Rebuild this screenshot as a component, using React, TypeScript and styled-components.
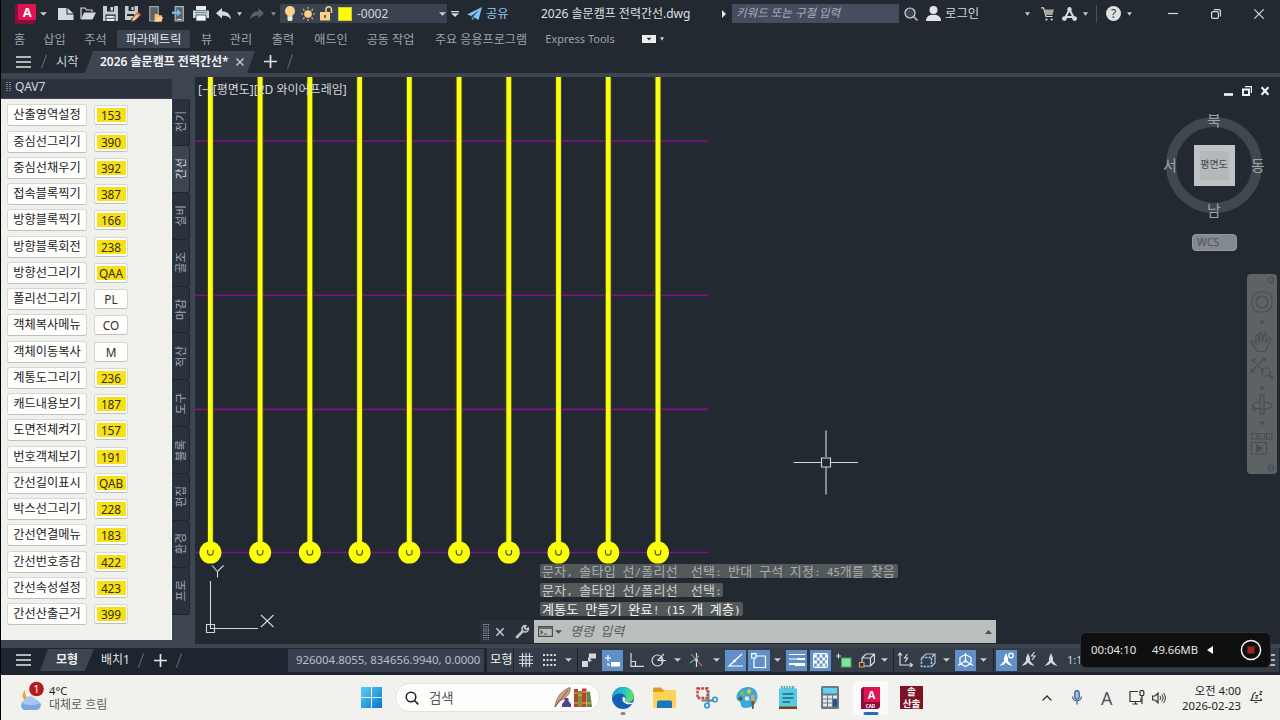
import React, { Fragment } from 'react';
import type { ReactNode } from 'react';
import styled, { createGlobalStyle, css } from 'styled-components';

const GlobalStyle = createGlobalStyle`
  * {
    box-sizing: border-box;
  }
  body {
    margin: 0;
    background: #000;
    font-family: 'Noto Sans', 'Noto Sans CJK KR', sans-serif;
    overflow: hidden;
  }
  svg {
    display: block;
    flex: none;
    overflow: visible;
  }
`;

const commands: [string, string][] = [
  ['산출영역설정', '153'],
  ['중심선그리기', '390'],
  ['중심선채우기', '392'],
  ['접속블록찍기', '387'],
  ['방향블록찍기', '166'],
  ['방향블록회전', '238'],
  ['방향선그리기', 'QAA'],
  ['폴리선그리기', 'PL'],
  ['객체복사메뉴', 'CO'],
  ['객체이동복사', 'M'],
  ['계통도그리기', '236'],
  ['캐드내용보기', '187'],
  ['도면전체켜기', '157'],
  ['번호객체보기', '191'],
  ['간선길이표시', 'QAB'],
  ['박스선그리기', '228'],
  ['간선연결메뉴', '183'],
  ['간선번호증감', '422'],
  ['간선속성설정', '423'],
  ['간선산출근거', '399'],
];

const plainCodes = ['PL', 'CO', 'M'];

const sideTabs = ['전기', '간선', '설비', '골조', '마감', '적산', '도구', '블록', '편집', '환경', '프로'];

const history = [
  { text: '문자, 솔타입 선/폴리선  선택: 반대 구석 지정: 45개를 찾음', width: 358, tone: '#a9adae' },
  { text: '문자, 솔타입 선/폴리선  선택:', width: 183, tone: '#c9cccd' },
  { text: '계통도 만들기 완료! (15 개 계층)', width: 203, tone: '#f2f3f3' },
];

const ribbonTabs = [
  { label: '홈', gap: 12, width: 13 },
  { label: '삽입', gap: 17, width: 23 },
  { label: '주석', gap: 18, width: 23 },
  { label: '파라메트릭', gap: 10, width: 73, active: true },
  { label: '뷰', gap: 10, width: 13 },
  { label: '관리', gap: 16, width: 24 },
  { label: '출력', gap: 18, width: 24 },
  { label: '애드인', gap: 18, width: 36 },
  { label: '공동 작업', gap: 17, width: 49 },
  { label: '주요 응용프로그램', gap: 18, width: 96 },
  { label: 'Express Tools', gap: 17, width: 68, size: 11 },
];

interface IconProps {
  w: number;
  h?: number;
  gap?: number;
  color?: string;
  children: ReactNode;
}

const Icon = ({ w, h = 16, gap = 0, color = '#d7dadd', children }: IconProps) => (
  <IconSlot $gap={gap}>
    <svg
      width={w}
      height={h}
      viewBox={`0 0 ${w} ${h}`}
      fill="none"
      stroke={color}
      strokeWidth="1.2"
    >
      {children}
    </svg>
  </IconSlot>
);

const Caret = ({ gap = 0, w = 5, color = '#c9cdd2' }: { gap?: number; w?: number; color?: string }) => (
  <Icon w={w} h={4} gap={gap}>
    <path d={`M0 0.3H${w}L${w / 2} 3.8Z`} fill={color} stroke="none" />
  </Icon>
);

const Burger = ({ gap = 0 }: { gap?: number }) => (
  <Icon w={15} h={12} gap={gap}>
    <path d="M0 1H15M0 6H15M0 11H15" stroke="#e4e6e8" strokeWidth="1.7" />
  </Icon>
);

const Slash = ({ gap = 0 }: { gap?: number }) => (
  <Icon w={6} h={15} gap={gap}>
    <path d="M0.5 14.5L5.5 0.5" stroke="#59616c" />
  </Icon>
);

const Plus = ({ gap = 0 }: { gap?: number }) => (
  <Icon w={13} h={13} gap={gap}>
    <path d="M6.5 0V13M0 6.5H13" stroke="#e4e6e8" strokeWidth="1.7" />
  </Icon>
);

const TitleBar = () => (
  <TitleRow>
    <Icon w={21} h={20} gap={14}>
      <path d="M2 0H21V17L18 20H0V2Z" fill="#8c0d38" stroke="none" />
      <path d="M3 0H21V16H3Z" fill="#e0124f" stroke="none" />
      <text x="12.3" y="13" textAnchor="middle" fontSize="13" fontWeight="700" fill="#fff" stroke="none">
        A
      </text>
    </Icon>
    <Caret gap={4} w={7} />
    <Icon w={16} h={12} gap={11}>
      <path d="M0 0H8.5V6.5H15.500V12H0Z" fill="#d7dadd" stroke="none" />
      <path d="M9.500 0L15.500 5.500H9.500Z" fill="#d7dadd" stroke="none" />
    </Icon>
    <Icon w={16} h={13} gap={6}>
      <path d="M1 12V1H5L6.5 3H12V5" />
      <path d="M1 12.5L4 5.5H16L12.5 12.5Z" fill="#d7dadd" stroke="none" />
    </Icon>
    <Icon w={15} h={15} gap={7}>
      <path d="M0 0H15V15H0Z" fill="#c6cacd" stroke="none" />
      <path d="M4 0H11V5.5H4Z" fill="#242a31" stroke="none" />
      <path d="M7.5 1H10V4.5H7.5Z" fill="#d7dadd" stroke="none" />
      <path d="M2.5 8.5H12.5V15H2.5Z" fill="#242a31" stroke="none" />
      <path d="M3.5 9.8H11.5V15H3.5Z" fill="#eceeef" stroke="none" />
      <path d="M3.5 12.4H11.5" stroke="#5a6068" />
    </Icon>
    <Icon w={16} h={16} gap={7}>
      <path d="M0 0H13V6L6 13V14H0Z" fill="#c6cacd" stroke="none" />
      <path d="M3.5 0H9.5V5H3.5Z" fill="#242a31" stroke="none" />
      <path d="M6.5 1H8.5V4H6.5Z" fill="#d7dadd" stroke="none" />
      <path d="M2 8H9V10H2Z" fill="#242a31" stroke="none" />
      <path d="M6.5 15.5L7.5 12L13 6.5L15.5 9L10 14.5Z" fill="#f0c78b" stroke="#7d4b23" strokeWidth=".7" />
      <path d="M12 7.5L13.3 6.2L15.8 8.7L14.5 10Z" fill="#d9683c" stroke="none" />
    </Icon>
    <Icon w={14} h={16} gap={8}>
      <path d="M.7 .7H9.3V15H.7Z" fill="#5a636c" stroke="#9aa1a8" />
      <path d="M5.5 15.5V8H9L10 9.3H13V15.5Z" fill="#e9bd6c" stroke="none" />
      <path d="M5.5 15.5L7.5 11H14L12.5 15.5Z" fill="#f6d79b" stroke="none" />
    </Icon>
    <Icon w={13} h={16} gap={9}>
      <path d="M3.2 .7H11.3V15H3.2Z" fill="#5a636c" stroke="#aeb4ba" />
      <path d="M0 5.5H5V3L9.5 6.7L5 10.3V8H0Z" fill="#6bbcf3" stroke="none" />
      <path d="M5 13.5H9.5" />
    </Icon>
    <Icon w={16} h={15} gap={8}>
      <path d="M3 0H13V4H3Z" fill="#e7e9ea" stroke="none" />
      <path d="M0 4.5H16V12H0Z" fill="#cfd3d6" stroke="none" />
      <path d="M2 6.5H14" stroke="#5c96c6" />
      <path d="M3 9H13V15H3Z" fill="#f4f5f5" stroke="#3b424a" strokeWidth=".8" />
    </Icon>
    <Icon w={15} h={12} gap={7}>
      <path d="M0 5.2L6 0V3.2C11 3.2 14.5 6 15 11.5C12.5 8.5 10 7.6 6 7.6V10.6Z" fill="#d7dadd" stroke="none" />
    </Icon>
    <Caret gap={6} />
    <Icon w={14} h={12} gap={8}>
      <path d="M14 5.2L8.5 0V3.2C4 3.2 .5 6 0 11.5C2.5 8.5 5 7.6 8.5 7.6V10.6Z" fill="#59616b" stroke="none" />
    </Icon>
    <Caret gap={7} color="#868d95" />
    <LayerCombo>
      <Icon w={10} h={15} gap={5}>
        <path d="M5 0A5 5 0 0 1 7.5 9.3V11H2.5V9.3A5 5 0 0 1 5 0Z" fill="#fbd289" stroke="none" />
        <path d="M2.5 11H7.5V14L6.5 15H3.5L2.5 14Z" fill="#e7e9ea" stroke="none" />
      </Icon>
      <Icon w={14} h={14} gap={6}>
        <circle cx="7" cy="7" r="3.8" fill="#fbd289" stroke="none" />
        <path
          d="M7 0V2M7 12V14M0 7H2M12 7H14M2 2L3.5 3.5M10.5 10.5L12 12M12 2L10.5 3.5M2 12L3.5 10.5"
          stroke="#dcb576"
        />
      </Icon>
      <Icon w={14} h={15} gap={4}>
        <path d="M1 6H11V14.5H1Z" fill="#fbd289" stroke="none" />
        <path d="M7 6V3.5A2.6 2.6 0 0 1 12.5 3.5V7" stroke="#fbd289" strokeWidth="1.5" />
        <path d="M6 9V12" stroke="#49402f" strokeWidth="1.5" />
      </Icon>
      <LayerColor />
      <Label $gap={5} $w={60} $size={12}>
        -0002
      </Label>
      <Caret gap={22} w={7} />
    </LayerCombo>
    <Icon w={8} h={6} gap={4}>
      <path d="M0 .6H8" />
      <path d="M0 2.2H8L4 6Z" fill="#d7dadd" stroke="none" />
    </Icon>
    <Icon w={15} h={14} gap={8}>
      <path d="M15 0L0 7.5L4.5 9L12 3L6 9.8L11.5 13Z" fill="#7cc4f4" stroke="none" />
      <path d="M4.6 9.5L5 13.5L7.3 11.2Z" fill="#4b9bd3" stroke="none" />
    </Icon>
    <Label $gap={4} $w={24} $color="#8ec8f0">
      공유
    </Label>
    <Label $gap={31} $w={150} $size={12} $color="#dfe1e3">
      2026 솔문캠프 전력간선.dwg
    </Label>
    <Icon w={4} h={8} gap={31}>
      <path d="M0 0L4 4L0 8Z" fill="#e4e6e8" stroke="none" />
    </Icon>
    <KeywordSearch>키워드 또는 구절 입력</KeywordSearch>
    <Icon w={14} h={14} gap={5}>
      <circle cx="6" cy="6" r="5" fill="#3b4652" />
      <path d="M9.6 9.6L13.5 13.5" strokeWidth="1.8" stroke="#b99f92" />
    </Icon>
    <Icon w={15} h={15} gap={8}>
      <circle cx="7.5" cy="4" r="4" fill="#e1e3e5" stroke="none" />
      <path d="M0 15C0 10.5 3 9.5 5.5 8.8H9.5C12 9.5 15 10.5 15 15Z" fill="#e1e3e5" stroke="none" />
    </Icon>
    <Label $gap={4} $w={35} $size={12.4}>
      로그인
    </Label>
    <Caret gap={45} />
    <Icon w={13} h={14} gap={11}>
      <path d="M0 .8H2.5L5 9.5H11.5" />
      <path d="M3 2.5H13L11.5 8H4.8Z" fill="#a9a79c" stroke="none" />
      <circle cx="5.5" cy="12.5" r="1.1" fill="#d7dadd" stroke="none" />
      <circle cx="10.7" cy="12.5" r="1.1" fill="#d7dadd" stroke="none" />
    </Icon>
    <Icon w={15} h={14} gap={8}>
      <path d="M2.8 11.5L7.5 2.5L12.2 11.5M4 10H11" strokeWidth="2" />
      <circle cx="7.5" cy="2.2" r="2.2" fill="#d7dadd" stroke="none" />
      <circle cx="2.4" cy="11.6" r="2.4" fill="#d7dadd" stroke="none" />
      <circle cx="12.6" cy="11.6" r="2.4" fill="#d7dadd" stroke="none" />
    </Icon>
    <Caret gap={6} />
    <Divider />
    <HelpBadge>?</HelpBadge>
    <Caret gap={6} />
    <Icon w={10} h={10} gap={36}>
      <path d="M0 4.5H10" />
    </Icon>
    <Icon w={10} h={10} gap={33}>
      <rect x=".6" y="2.6" width="6.8" height="6.8" rx="1.3" />
      <path d="M2.8 .6H8A1.4 1.4 0 0 1 9.4 2V7.4" />
    </Icon>
    <Icon w={10} h={10} gap={33}>
      <path d="M.3 .3L9.7 9.7M9.7 .3L.3 9.7" />
    </Icon>
  </TitleRow>
);

const Palette = () => (
  <PaletteColumn>
    <PaletteHeader>
      <Icon w={5} h={10} gap={5}>
        <path d="M1 0V10M4 0V10" stroke="#9ba2aa" strokeDasharray="1 1" strokeWidth="1.4" />
      </Icon>
      <Label $gap={4} $w={40} $size={12}>
        QAV7
      </Label>
    </PaletteHeader>
    <PaletteBody>
      {commands.map(([label, code]) => (
        <CommandRow key={label}>
          <CommandButton>{label}</CommandButton>
          <CodeButton>
            <Code $plain={plainCodes.includes(code)}>{code}</Code>
          </CodeButton>
        </CommandRow>
      ))}
    </PaletteBody>
  </PaletteColumn>
);

const Drawing = () => (
  <svg width="1085" height="567" viewBox="195 77 1085 567">
    <g stroke="#820f8d" strokeWidth="1.6">
      <path d="M195 141H708M195 295.3H708M195 409.4H708M195 552.5H708" />
    </g>
    {Array.from({ length: 10 }, (_, i) => {
      const x = 210.4 + i * 49.73;
      return (
        <g key={i}>
          <path d={`M${x} 77V545`} stroke="#4b4d16" strokeWidth="6.6" />
          <path d={`M${x} 77V545`} stroke="#fbff14" strokeWidth="4.8" />
          <circle cx={x} cy="552.6" r="11" fill="#fbff0c" />
          <path
            d={`M${x - 2.8} 550V552.3A2.8 2.8 0 0 0 ${x + 2.8} 552.3V550`}
            fill="none"
            stroke="#4f5310"
            strokeWidth="1.1"
          />
        </g>
      );
    })}
    <g stroke="#d5d8db" strokeWidth="1.1" fill="none">
      <path d="M210.5 581V628.5H258" />
      <path d="M206.5 624.5H214.5V632.5H206.5Z" />
      <path d="M212 565.5L217.5 571.5L223.5 565.5M217.5 571.5V577.5" />
      <path d="M261 615L273.5 627M273.5 615L261 627" />
      <path d="M826 430.5V457M826 467V494.5M793.5 462.5H821M831 462.5H858" />
      <path d="M821.5 458H830.5V467H821.5Z" />
    </g>
  </svg>
);

const ViewCube = () => (
  <CubeLayer>
    <CubeRing>
      <CubeFace>평면도</CubeFace>
    </CubeRing>
    <Compass $x={44} $y={0}>북</Compass>
    <Compass $x={0} $y={45}>서</Compass>
    <Compass $x={88} $y={45}>동</Compass>
    <Compass $x={44} $y={90}>남</Compass>
    <WcsButton>WCS</WcsButton>
  </CubeLayer>
);

const NavBar = () => (
  <NavPanel>
    <svg width="30" height="200" viewBox="0 0 30 200" fill="none" stroke="#484d51" strokeWidth="1.1">
      <circle cx="24" cy="6" r="2.6" />
      <rect x="5" y="18" width="20" height="20" rx="8" />
      <circle cx="15" cy="28" r="6" />
      <path d="M13 47H17L15 49.5Z" fill="#484d51" />
      <path d="M10 77C8 73 5 70 4 67.5C5 66 7.500 67.500 9.500 70L8.500 62C9 60.500 10.500 61 11 62.500L12.500 68L12.500 59.500C13 58 14.700 58 15 60L15.500 67L17.500 60C18.500 59 20 60 19.500 61.500L18.500 68.500L22 64C23.500 63.500 24.500 65 23.500 66.500L19.500 75L18.500 78Z" />
      <path d="M5 85L17 98M18 84L4 98M5 89V85H9M14 84H18V88M4 94V98H8" />
      <circle cx="19" cy="98" r="4.300" />
      <path d="M22 101L26 105" strokeWidth="2" />
      <path d="M13 113H17L15 115.500Z" fill="#484d51" />
      <path d="M13 121H17V140H13ZM13 128C2 129 2 135 15 135C28 135 28 129 17 128M8 132L5 135L9 137" />
      <path d="M13 148H17L15 150.500Z" fill="#484d51" />
      <path d="M4.500 159.500H10V165H4.500ZM12 159.500H17.500V165H12ZM19.500 159.500H25V165H19.500ZM4.500 168.500H19.500V180H4.500Z" />
      <path d="M9.500 171L15 174.200L9.500 177.500Z" fill="#484d51" />
      <circle cx="24" cy="194" r="3" />
      <path d="M22 194H26" />
    </svg>
  </NavPanel>
);

const monoParts = (text: string) =>
  text.split(/([가-힣]+)/).map((part, i) => (
    <Fragment key={i}>{i % 2 ? part : <Mono>{part}</Mono>}</Fragment>
  ));

const CommandLine = () => (
  <CommandLayer>
    {history.map(({ text, width, tone }) => (
      <HistoryLine key={text} $w={width} $tone={tone}>
        {monoParts(text)}
      </HistoryLine>
    ))}
    <CommandBar>
      <Icon w={6} h={16} gap={3}>
        <path d="M.8 0V16M3 0V16M5.300 0V16" stroke="#b4b9be" strokeDasharray="1 1.200" />
      </Icon>
      <Icon w={8} h={8} gap={7} color="#c2c6ca">
        <path d="M.3 .3L7.700 7.700M7.700 .3L.3 7.700" strokeWidth="1.500" />
      </Icon>
      <Icon w={14} h={14} gap={11} color="#c2c6ca">
        <path d="M1.200 12.800L8 6" strokeWidth="2.600" />
        <path d="M13.300 3A3.200 3.200 0 1 1 10.800 .7L9.500 3L10.900 4.500Z" strokeWidth="1.600" />
      </Icon>
      <CommandInput>
        <Icon w={15} h={11} gap={4} color="#4b5053">
          <path d="M.6 .6H14.400V10.400H.6ZM.6 2.200H14.400" />
          <path d="M2.500 4.500L4.500 6.200L2.500 8M6 8H9" />
        </Icon>
        <Caret gap={2} w={7} color="#4b5053" />
        <CommandHint>
          명령<Mono> </Mono>입력
        </CommandHint>
        <Icon w={7} h={4}>
          <path d="M0 4L3.500 0L7 4Z" fill="#4b5053" stroke="none" />
        </Icon>
      </CommandInput>
    </CommandBar>
  </CommandLayer>
);

const Viewport = () => (
  <Canvas>
    <ViewControls>
      <span>[−][평면도][2D 와이어프레임]</span>
    </ViewControls>
    <Drawing />
    <WindowButtons>
      <Icon w={9} h={9} color="#f3f4f5">
        <path d="M0 7.500H9" strokeWidth="2.600" />
      </Icon>
      <Icon w={10} h={10} color="#f3f4f5">
        <path d="M1 3.500H7V9H1Z" strokeWidth="2" />
        <path d="M3 .7H9.400V7" />
      </Icon>
      <Icon w={8} h={8} color="#f3f4f5">
        <path d="M.6 .3L7.400 7.700M7.400 .3L.6 7.700" strokeWidth="2.200" />
      </Icon>
    </WindowButtons>
    <ViewCube />
    <NavBar />
    <CommandLine />
  </Canvas>
);

const annotation = 'M7 0L9 5V8L13.500 13L9 11.500L7 9.500L5 11.500L.5 13L5 8V5Z';

const StatusBar = () => (
  <StatusRow>
    <Burger gap={15} />
    <LayoutTab>모형</LayoutTab>
    <Label $gap={7} $w={30} $size={12} $color="#e2e4e6">
      배치1
    </Label>
    <Slash gap={7} />
    <Plus gap={10} />
    <Slash gap={9} />
    <Coordinates>926004.8055, 834656.9940, 0.0000</Coordinates>
    <StatusGroup $gap={3} $w={26}>
      <Label $gap={3} $w={24} $color="#f0f1f2">
        모형
      </Label>
    </StatusGroup>
    <StatusGroup $gap={1} $w={63}>
      <Icon w={14} h={14} gap={5}>
        <path d="M3.500 0V14M7 0V14M10.500 0V14M0 3.500H14M0 7H14M0 10.500H14" />
      </Icon>
      <Icon w={13} h={12} gap={10}>
        <path d="M0 1H13M0 6H13M0 11H13" strokeDasharray="2 1.600" strokeWidth="1.800" />
      </Icon>
      <Caret gap={9} w={7} />
    </StatusGroup>
    <StatusGroup $gap={1} $w={315}>
      <Icon w={14} h={14} gap={4}>
        <path d="M0 8H6V14H0ZM6 4V8H10" fill="#d7dadd" stroke="none" />
        <path d="M7.500 9V1H13V5H7.500" />
        <path d="M8 1H14V5H8Z" fill="#d7dadd" stroke="none" />
      </Icon>
      <Toggle $gap={6} $w={21}>
        <Icon w={15} h={13} color="#fff">
          <path d="M0 4H6M3 1V7M3 9V11H5" />
          <path d="M6 8H15V12.500H6Z" fill="#fff" stroke="none" />
        </Icon>
      </Toggle>
      <Icon w={14} h={14} gap={7}>
        <path d="M1 0V13.300H14M1 8.500H5.500V13" />
      </Icon>
      <Icon w={15} h={14} gap={7}>
        <circle cx="6.500" cy="7.500" r="5.500" />
        <path d="M6.500 7.500L13 1M6.500 7.500H15M10 5L11.500 10" />
      </Icon>
      <Caret gap={8} w={7} />
      <Icon w={13} h={14} gap={9}>
        <path d="M1 1L12 13" stroke="#b6617c" />
        <path d="M6.500 0V14" stroke="#dadddf" />
        <path d="M0 10L9 3" stroke="#6fae87" />
        <circle cx="6.500" cy="7" r="1.500" fill="#d7dadd" stroke="none" />
      </Icon>
      <Caret gap={10} w={7} />
      <Toggle $gap={5} $w={21}>
        <Icon w={16} h={14} color="#fff">
          <path d="M15 13H1L14 1" />
          <circle cx="6.500" cy="8" r="1.400" fill="#fff" stroke="none" />
        </Icon>
      </Toggle>
      <Toggle $gap={2} $w={22}>
        <Icon w={16} h={15} color="#fff">
          <path d="M3 3H14.500V14.500H3Z" />
          <path d="M.6 .6H5V5H.6Z" fill="#6396cf" />
        </Icon>
      </Toggle>
      <Caret gap={4} w={7} />
      <Toggle $gap={5} $w={21}>
        <Icon w={16} h={14} color="#fff">
          <path d="M0 1.500H16M0 6H8" />
          <path d="M8 6H16M0 11H6" strokeWidth="2" />
          <path d="M6 11.500H16" strokeWidth="3" />
        </Icon>
      </Toggle>
      <Toggle $gap={3} $w={21}>
        <Icon w={15} h={15} color="#fff">
          <rect x=".6" y=".6" width="13.800" height="13.800" rx="1.500" />
          <path d="M1 3H14M1 9H14" strokeDasharray="3 2.500" strokeWidth="3" />
          <path d="M3.800 6H14M3.800 12H14" strokeDasharray="3 2.500" strokeWidth="3" />
        </Icon>
      </Toggle>
      <Icon w={15} h={15} gap={5}>
        <path d="M0 3H5M2.500 .5V5.500" />
        <path d="M5.500 5H15V14H5.500Z" fill="#7fe59a" stroke="#4aa367" />
      </Icon>
      <Icon w={16} h={15} gap={8}>
        <path d="M3 5L7 1H15.400V9L11.500 13H3ZM3 5H11.500V13M11.500 5L15.400 1" />
        <path d="M.5 9.500H5V14H.5Z" fill="#2d3540" stroke="#dc9c62" />
      </Icon>
      <Caret gap={6} w={7} />
    </StatusGroup>
    <StatusGroup $gap={1} $w={99}>
      <Icon w={15} h={14} gap={4}>
        <path d="M2 0V12H14M0 2.500L2 0L4 2.500M12 10L14.500 12L12 14M9.500 1L6.500 5H9.500L7 9" />
      </Icon>
      <Icon w={16} h={15} gap={7} color="#8cc5ee">
        <path d="M1.500 4.500H11.500V13.500H1.500Z" strokeDasharray="2.500 1" strokeWidth="1.600" />
        <path d="M3 4L6 1H15V10L12 13M12 4L15 1" stroke="#b8bec5" />
      </Icon>
      <Caret gap={7} w={7} />
      <Toggle $gap={5} $w={21}>
        <Icon w={15} h={15} color="#fff">
          <path d="M7.500 1.500L13 4.500V10.500L7.500 13.500L2 10.500V4.500ZM7.500 0V8L0 12.500M7.500 8L15 12.500" />
          <circle cx="7.500" cy="8" r="1.500" fill="#fff" stroke="none" />
        </Icon>
      </Toggle>
      <Caret gap={4} w={7} />
    </StatusGroup>
    <StatusGroup $gap={1} $w={285}>
      <Toggle $gap={2} $w={21}>
        <Icon w={15} h={14} color="#fff">
          <path d={annotation} fill="#fff" stroke="none" />
          <circle cx="12" cy="2.500" r="2.300" fill="#6396cf" />
        </Icon>
      </Toggle>
      <Icon w={15} h={14} gap={4}>
        <path d={annotation} fill="#d7dadd" stroke="none" />
        <path d="M13.500 -1L10.500 3H14L11 7" />
      </Icon>
      <Icon w={14} h={14} gap={8}>
        <path d={annotation} fill="#d7dadd" stroke="none" />
      </Icon>
      <Label $gap={9} $w={200} $size={11}>
        1:1
      </Label>
      <Icon w={8} h={12}>
        <path d="M0 1H8M0 6H8M0 11H8" strokeWidth="1.500" />
      </Icon>
    </StatusGroup>
  </StatusRow>
);

const Taskbar = () => (
  <TaskRow>
    <Icon w={24} h={28} gap={17}>
      <path d="M7 6A7 7 0 1 0 18 14L14 16C9 16 7 11 7 6Z" fill="#f0a12d" stroke="none" />
      <path d="M7 26A5 5 0 0 1 6 16.500A6 6 0 0 1 17 15.500A5.300 5.300 0 0 1 18 26Z" fill="#a9c5f2" stroke="none" />
      <path d="M6 26A4 4 0 0 1 5 19C9 22 17 22 22.500 19A5 5 0 0 1 18 26Z" fill="#7ea4e4" stroke="none" />
      <circle cx="18.500" cy="5" r="7.300" fill="#b3191f" stroke="none" />
      <text x="18.500" y="9" textAnchor="middle" fontSize="11" fill="#fff" stroke="none">
        1
      </text>
    </Icon>
    <Weather>
      <span>4°C</span>
      <WeatherNote>대체로 흐림</WeatherNote>
    </Weather>
    <Icon w={21} h={21} gap={246}>
      <defs>
        <linearGradient id="win" x1="0" y1="0" x2="1" y2="1">
          <stop offset="0" stopColor="#5bd0f5" />
          <stop offset="1" stopColor="#0a74cf" />
        </linearGradient>
      </defs>
      <path d="M0 0H10V10H0ZM11 0H21V10H11ZM0 11H10V21H0ZM11 11H21V21H11Z" fill="url(#win)" stroke="none" />
    </Icon>
    <TaskSearch>
      <Icon w={14} h={14} gap={9} color="#222">
        <circle cx="6" cy="6" r="4.800" strokeWidth="1.500" />
        <path d="M9.500 9.500L13.300 13.300" strokeWidth="1.700" />
      </Icon>
      <Label $gap={10} $w={115} $size={13.4} $color="#565656">
        검색
      </Label>
      <Icon w={39} h={21} gap={10}>
        <path d="M1 20C2 12 6 4 16 .5C17 6 12 12 5 14Z" fill="#d0a38a" stroke="#8a5f4d" strokeWidth=".8" />
        <path d="M1 20L14 3" stroke="#6c4a3d" strokeWidth=".9" />
        <path d="M10.500 11H14.500V14L17 17V20H8V17L10.500 14Z" fill="#50468a" stroke="none" />
        <path d="M20 2H24V20H20Z" fill="#ad4a2c" stroke="none" />
        <path d="M24 4H28V20H24Z" fill="#7d9440" stroke="none" />
        <path d="M28 1.500H32.500V20H28Z" fill="#c23f31" stroke="none" />
        <path d="M32.500 5L36 4.500L38 20H33Z" fill="#5d8a4b" stroke="none" />
        <path d="M20 6H24M24 8H28M28 5H32.500M20 16H24M28 16H38" stroke="#e4b45c" />
      </Icon>
    </TaskSearch>
    <RunningApp>
      <Icon w={22} h={22}>
        <defs>
          <linearGradient id="edgeTop" x1="0" y1="0" x2="1" y2="0.300">
            <stop offset="0" stopColor="#1794e0" />
            <stop offset=".6" stopColor="#2cc5c6" />
            <stop offset="1" stopColor="#62dc6a" />
          </linearGradient>
        </defs>
        <circle cx="11" cy="11" r="11" fill="#125fb4" stroke="none" />
        <path d="M0 10C1 3.500 5.500 0 11 0C17.500 0 22 4.500 22 9.500C22 13.500 18.500 15.200 15.500 15C13 14.800 12.500 13.500 13.500 12.500C15 10 12 6.500 8.500 6.500C4.500 6.500 1 8.500 0 12Z" fill="url(#edgeTop)" stroke="none" />
        <path d="M10.800 10.200C9.800 12 10.500 14.200 12 15.500C14.500 17.500 18 17.800 20.800 16.700L22 15C20 16 17.500 16 15.500 15C13 14.800 12.500 13.500 13.500 12.500C14 11 12 9 10.800 10.200Z" fill="#e6f1f4" stroke="none" />
      </Icon>
      <Indicator $w={5} $color="#8a8a8a" />
    </RunningApp>
    <Icon w={23} h={22} gap={19}>
      <path d="M0 2.500C0 1 1 .5 2 .5H8L10.500 3H21C22.500 3 23 4 23 5V12H0Z" fill="#dc9d1e" stroke="none" />
      <path d="M0 5H10L12 3H23V19C23 20.500 22 21 21 21H2C1 21 0 20.500 0 19Z" fill="#fcd355" stroke="none" />
      <path d="M4 21V15.500C4 14 5 13.500 6 13.500H17C18 13.500 19 14 19 15.500V21Z" fill="#1a79bd" stroke="none" />
    </Icon>
    <Icon w={22} h={22} gap={20}>
      <path d="M1.500 1.500H11.500V11H1.500Z" stroke="#c23b2e" strokeWidth="2.300" strokeDasharray="2.600 1.200" />
      <path d="M12.500 3V16.500M5.500 13.500H18" stroke="#717a80" strokeWidth="1.800" />
      <circle cx="11" cy="18.500" r="2.300" stroke="#2f98d4" strokeWidth="1.600" />
      <circle cx="19" cy="12.500" r="2.300" stroke="#2f98d4" strokeWidth="1.600" />
    </Icon>
    <Icon w={22} h={22} gap={18}>
      <path d="M12 0C18 0 21.500 4 21.500 9C21.500 15 17 21.500 8.500 21C4 20.500 5.500 16.500 3.500 14.500C1.500 13.500 0 12 .5 9C1.500 4 6 0 12 0Z" fill="#39a9dc" stroke="none" />
      <circle cx="6.500" cy="6.500" r="2.300" fill="#7cc243" stroke="none" />
      <circle cx="13" cy="4.500" r="2.200" fill="#f1c13b" stroke="none" />
      <circle cx="4.500" cy="11.500" r="2" fill="#7b4c3e" stroke="none" />
      <circle cx="11" cy="11.500" r="2.200" fill="#e9eef0" stroke="none" />
      <path d="M15 8H18.500V14H15Z" fill="#d4a565" stroke="none" />
      <path d="M15.200 14H18.300L17.500 22H16Z" fill="#7c5132" stroke="none" />
    </Icon>
    <Icon w={18} h={23} gap={21}>
      <path d="M0 2.500H18V22H0Z" fill="#58cbe2" stroke="none" />
      <path d="M0 20.500H18V23H0Z" fill="#7a3f1b" stroke="none" />
      <path d="M2 1.500H16" stroke="#3fa3bb" strokeWidth="3" strokeDasharray="1.500 1.200" />
      <path d="M3.500 8H14.500M3.500 12H14.500M3.500 16H11" stroke="#156e86" strokeWidth="1.600" />
    </Icon>
    <Icon w={18} h={23} gap={24}>
      <rect width="18" height="23" rx="1.500" fill="#6c7983" stroke="none" />
      <path d="M2 2H16V7.500H2Z" fill="#62d1ec" stroke="none" />
      <path d="M2 11H11M2 15H11M2 19H11" stroke="#e6eaec" strokeWidth="3" strokeDasharray="4 1" />
      <path d="M12 9.500H16V12.500H12Z" fill="#e6eaec" stroke="none" />
      <path d="M12 13.500H16V20.500H12Z" fill="#205491" stroke="none" />
    </Icon>
    <ActiveApp>
      <Icon w={19} h={22}>
        <path d="M2 0H19V20L17 22H0V2Z" fill="#8c0d38" stroke="none" />
        <path d="M3 0H19V15H3Z" fill="#e0124f" stroke="none" />
        <text x="10.500" y="12" textAnchor="middle" fontSize="11" fontWeight="700" fill="#fff" stroke="none">
          A
        </text>
        <text x="9.500" y="20.500" textAnchor="middle" fontSize="4.500" fontWeight="700" fill="#fff" stroke="none">
          CAD
        </text>
      </Icon>
      <Indicator $w={15} $color="#1e6fbd" />
    </ActiveApp>
    <SolTile>
      <span>솔</span>
      <span>산출</span>
    </SolTile>
    <Icon w={10} h={6} gap={119} color="#333">
      <path d="M.5 5.500L5 1L9.500 5.500" strokeWidth="1.400" />
    </Icon>
    <Icon w={10} h={15} gap={20} color="#39598d">
      <rect x="2.800" y=".6" width="4.400" height="8.600" rx="2.200" fill="#a9c4e8" />
      <path d="M.6 6.500A4.400 4.400 0 0 0 9.400 6.500M5 11V14.500" />
    </Icon>
    <Label $gap={19} $w={14} $size={18} $color="#555">
      A
    </Label>
    <Icon w={15} h={15} gap={14} color="#333">
      <path d="M9 1.500H1V11.500H12V8M3.500 14H9M6.500 11.500V14" />
      <rect x="11" y=".6" width="3.800" height="5" rx="1" />
      <path d="M13 5.600V14" />
    </Icon>
    <Icon w={14} h={12} gap={8} color="#333">
      <path d="M.6 4H3L6 1.200V10.800L3 8H.6Z" />
      <path d="M8 4A3 3 0 0 1 8 8M9.700 2.500A5 5 0 0 1 9.700 9.500M11.500 1A7.500 7.500 0 0 1 11.500 11" strokeWidth="1" />
    </Icon>
    <Clock>
      <span>오전 4:00</span>
      <span>2026-02-23</span>
    </Clock>
    <Icon w={13} h={13} gap={9} color="#333">
      <path d="M6 1.500C3 2 2.500 4 2.500 6.500L1 9.500H11.500L10.500 7.500M4.500 11.500H7.500" />
      <path d="M5.500 4.500H8L5.500 7.200H8M9.500 .6H12L9.500 3.500H12" strokeWidth="1" />
    </Icon>
  </TaskRow>
);

const Recorder = () => (
  <RecorderPanel>
    <Label $gap={10} $w={50} $size={11.4} $color="#e6e6e6">
      00:04:10
    </Label>
    <Label $gap={11} $w={50} $size={11.2} $color="#e6e6e6">
      49.66MB
    </Label>
    <Icon w={6} h={8} gap={5}>
      <path d="M6 0V8L0 4Z" fill="#fff" stroke="none" />
    </Icon>
    <Icon w={22} h={22} gap={27}>
      <circle cx="11" cy="11" r="9.600" stroke="#f4f4f4" strokeWidth="1.500" />
      <rect x="7.500" y="7.500" width="7" height="7" fill="#a22226" stroke="none" />
    </Icon>
  </RecorderPanel>
);

export default function App() {
  return (
    <Screen>
      <GlobalStyle />
      <TitleBar />
      <RibbonRow>
        {ribbonTabs.map(({ label, gap, width, size, active }) => (
          <RibbonTab key={label} $gap={gap} $w={width} $size={size} $active={active}>
            {label}
          </RibbonTab>
        ))}
        <Icon w={14} h={8} gap={28}>
          <path d="M0 0H14V8H0Z" fill="#eceeef" stroke="none" />
          <path d="M4.500 2.800H9.500L7 5.500Z" fill="#333" stroke="none" />
        </Icon>
        <Caret gap={4} w={4} />
      </RibbonRow>
      <FileRow>
        <Burger gap={15} />
        <Slash gap={10} />
        <Label $gap={9} $w={24}>
          시작
        </Label>
        <FileTab>
          <Label $w={131} $size={12} $bold $color="#f1f2f3">
            2026 솔문캠프 전력간선*
          </Label>
          <Icon w={8} h={8} gap={5} color="#b9bec4">
            <path d="M.5 .5L7.500 7.500M7.500 .5L.5 7.500" strokeWidth="1.600" />
          </Icon>
        </FileTab>
        <Plus gap={9} />
        <Slash gap={10} />
      </FileRow>
      <Workspace>
        <Palette />
        <SideTabs>
          {sideTabs.map((tab, i) => (
            <SideTab key={tab} $active={i === 1}>
              <span>{tab}</span>
            </SideTab>
          ))}
        </SideTabs>
        <Viewport />
      </Workspace>
      <StatusBar />
      <Taskbar />
      <Recorder />
    </Screen>
  );
}

const row = css`
  display: flex;
  align-items: center;
`;

const Screen = styled.div`
  position: relative;
  display: flex;
  flex-direction: column;
  width: 1280px;
  height: 720px;
  padding-left: 1px;
  background: #000;
  overflow: hidden;
`;

const IconSlot = styled.span<{ $gap: number }>`
  flex: none;
  margin-left: ${({ $gap }) => $gap}px;
`;

const Label = styled.span<{
  $gap?: number;
  $w: number;
  $size?: number;
  $color?: string;
  $bold?: boolean;
}>`
  flex: none;
  width: ${({ $w }) => $w}px;
  margin-left: ${({ $gap = 0 }) => $gap}px;
  font-size: ${({ $size = 12.3 }) => $size}px;
  font-weight: ${({ $bold }) => ($bold ? 600 : 400)};
  line-height: 16px;
  color: ${({ $color = '#d4d7da' }) => $color};
  white-space: nowrap;
`;

const TitleRow = styled.header`
  ${row}
  flex: none;
  height: 27px;
  background: #232930;
`;

const LayerCombo = styled.div`
  ${row}
  flex: none;
  width: 167px;
  height: 19px;
  margin-left: 4px;
  background: #3a4350;
`;

const LayerColor = styled.span`
  flex: none;
  width: 14px;
  height: 14px;
  margin-left: 5px;
  background: #fdff00;
  border: 1px solid #c9cc3c;
`;

const KeywordSearch = styled.div`
  flex: none;
  width: 167px;
  height: 19px;
  margin-left: 6px;
  padding-left: 4px;
  background: #454e5f;
  color: #a9afb9;
  font-size: 11.5px;
  font-style: italic;
  line-height: 18px;
  white-space: nowrap;
`;

const Divider = styled.span`
  width: 1px;
  height: 18px;
  margin-left: 8px;
  background: #4a525d;
`;

const HelpBadge = styled.span`
  flex: none;
  width: 15px;
  height: 15px;
  margin-left: 9px;
  border-radius: 50%;
  background: #dfe1e3;
  color: #2b3138;
  font-size: 12px;
  line-height: 15px;
  text-align: center;
`;

const RibbonRow = styled.nav`
  ${row}
  flex: none;
  height: 23px;
  background: #232930;
`;

const RibbonTab = styled.span<{ $gap: number; $w: number; $size?: number; $active?: boolean }>`
  ${row}
  justify-content: center;
  flex: none;
  width: ${({ $w }) => $w}px;
  height: 18px;
  margin-left: ${({ $gap }) => $gap}px;
  font-size: ${({ $size = 12.1 }) => $size}px;
  white-space: nowrap;
  color: ${({ $active }) => ($active ? '#e8eaec' : '#9ea4ab')};
  background: ${({ $active }) => ($active ? '#3a434f' : 'transparent')};
`;

const FileRow = styled.div`
  ${row}
  flex: none;
  height: 23px;
  background: #232930;
`;

const FileTab = styled.div`
  ${row}
  flex: none;
  width: 170px;
  height: 22px;
  margin: 1px 0 0 5px;
  padding-left: 15px;
  background: #3d4651;
  clip-path: polygon(8px 0, 100% 0, 162px 100%, 0 100%);
`;

const Workspace = styled.main`
  display: flex;
  flex: none;
  height: 575px;
  padding: 4px 0;
  background: #3c4550;
`;

const PaletteColumn = styled.aside`
  width: 171px;
  padding-top: 2px;
`;

const PaletteHeader = styled.div`
  ${row}
  height: 19px;
  padding-bottom: 3px;
  background: #2b323d;
`;

const PaletteBody = styled.div`
  display: flex;
  flex-direction: column;
  height: 541px;
  margin-top: 1px;
  padding: 3.3px 0 0 6px;
  background: #f0f0ed;
  border-right: 1px solid #fff;
`;

const CommandRow = styled.div`
  ${row}
  flex: none;
  gap: 7px;
  height: 26.26px;
`;

const button = css`
  ${row}
  justify-content: center;
  background: #fefefd;
  border: 1px solid #d6d7d5;
  border-bottom-color: #bfc0be;
  border-radius: 3px;
`;

const CommandButton = styled.div`
  ${button}
  width: 80px;
  height: 22px;
  color: #1c1c1c;
  font-size: 12.2px;
  line-height: 20px;
  white-space: nowrap;
`;

const CodeButton = styled.div`
  ${button}
  width: 34px;
  height: 20px;
`;

const Code = styled.span<{ $plain: boolean }>`
  width: 29px;
  height: 14px;
  background: ${({ $plain }) => ($plain ? 'transparent' : '#f8e018')};
  color: #332f10;
  font-size: 11.8px;
  line-height: 14px;
  text-align: center;
`;

const SideTabs = styled.div`
  width: 23px;
  padding-top: 22px;
`;

const SideTab = styled.div<{ $active: boolean }>`
  ${row}
  justify-content: center;
  width: 18px;
  height: 46.9px;
  background: ${({ $active }) => ($active ? '#3c4551' : '#2b323d')};
  border: solid #20262e;
  border-width: 0 1px 1px 0;
  border-radius: 0 3px 3px 0;

  span {
    color: ${({ $active }) => ($active ? '#d5d8db' : '#a3a9b1')};
    font-size: 11.5px;
    line-height: 16px;
    writing-mode: vertical-rl;
    text-orientation: sideways;
    transform: rotate(180deg);
  }
`;

const Canvas = styled.section`
  position: relative;
  flex: none;
  width: 1085px;
  height: 567px;
  background: #232930;
`;

const ViewControls = styled.div`
  position: absolute;
  top: 4px;
  left: 3px;
  color: #d6d9dc;
  font-size: 12px;
  line-height: 17px;
  white-space: nowrap;
`;

const WindowButtons = styled.div`
  ${row}
  position: absolute;
  top: 9px;
  right: 11px;
  gap: 9px;
`;

const CubeLayer = styled.div`
  position: absolute;
  top: 40px;
  left: 971px;
  width: 96px;
  height: 140px;
`;

const CubeRing = styled.div`
  ${row}
  justify-content: center;
  width: 96px;
  height: 96px;
  border: 10px solid #40484f;
  border-radius: 50%;
`;

const CubeFace = styled.div`
  width: 41px;
  height: 41px;
  background: #b4b8ba;
  border: 6px solid #bfc3c5;
  color: #474b4e;
  font-size: 10px;
  line-height: 27px;
  text-align: center;
  display: flex;
  justify-content: center;
  white-space: nowrap;
`;

const Compass = styled.span<{ $x: number; $y: number }>`
  position: absolute;
  left: ${({ $x }) => $x - 4}px;
  top: ${({ $y }) => $y - 6}px;
  width: 16px;
  color: #9ea3a8;
  font-size: 15px;
  line-height: 18px;
  text-align: center;
`;

const WcsButton = styled.div`
  position: absolute;
  top: 117px;
  left: 26px;
  width: 45px;
  height: 17px;
  padding-left: 4px;
  background: #84888f;
  border: 1px solid #9498a0;
  border-radius: 4px;
  color: #4e535a;
  font-size: 10.5px;
  line-height: 14px;
`;

const NavPanel = styled.div`
  position: absolute;
  top: 197px;
  right: 3px;
  background: #5d6265;
  border-radius: 4px;
`;

const CommandLayer = styled.div`
  position: absolute;
  top: 487px;
  left: 285px;
  width: 516px;
`;

const HistoryLine = styled.div<{ $w: number; $tone: string }>`
  width: ${({ $w }) => $w}px;
  height: 14px;
  margin: 0 0 5px 60px;
  padding-left: 2px;
  background: #535859;
  border-radius: 2px;
  color: ${({ $tone }) => $tone};
  font-family: 'Noto Sans CJK KR', sans-serif;
  font-size: 13px;
  letter-spacing: 0.3px;
  line-height: 14px;
  white-space: pre;
`;

const Mono = styled.span`
  font-family: 'DejaVu Sans Mono', monospace;
  font-size: 10.6px;
  letter-spacing: 0;
`;

const CommandBar = styled.div`
  ${row}
  height: 23px;
  margin-top: -1px;
  background: #2a313a;
`;

const CommandInput = styled.div`
  ${row}
  flex: none;
  width: 462px;
  height: 23px;
  margin-left: 5px;
  background: #babebd;
`;

const CommandHint = styled.span`
  flex: none;
  width: 415px;
  margin-left: 8px;
  color: #585d60;
  font-size: 13px;
  font-style: italic;
  line-height: 20px;
`;

const StatusRow = styled.div`
  ${row}
  flex: none;
  height: 27px;
  padding-bottom: 3px;
  background: #1f252e;
`;

const LayoutTab = styled.div`
  width: 54px;
  height: 22px;
  margin-left: 9px;
  padding-left: 16px;
  background: #3c4551;
  clip-path: polygon(8px 0, 100% 0, 45px 100%, 0 100%);
  color: #f0f1f2;
  font-size: 12px;
  font-weight: 600;
  line-height: 22px;
`;

const Coordinates = styled.div`
  flex: none;
  width: 196px;
  height: 23px;
  margin-left: 106px;
  padding-left: 8px;
  background: #393f4e;
  color: #b9bfc8;
  font-size: 11.42px;
  line-height: 22px;
  white-space: nowrap;
`;

const StatusGroup = styled.div<{ $gap: number; $w: number }>`
  ${row}
  flex: none;
  width: ${({ $w }) => $w}px;
  height: 24px;
  margin-left: ${({ $gap }) => $gap}px;
  background: #343c48;
`;

const Toggle = styled.span<{ $gap: number; $w: number }>`
  ${row}
  justify-content: center;
  flex: none;
  width: ${({ $w }) => $w}px;
  height: 21px;
  margin-left: ${({ $gap }) => $gap}px;
  background: #6090c7;
`;

const TaskRow = styled.footer`
  ${row}
  flex: none;
  height: 45px;
  background: #f1f2ee;
`;

const Weather = styled.div`
  display: flex;
  flex-direction: column;
  width: 66px;
  margin-left: 7px;
  color: #222;
  font-size: 11.2px;
  line-height: 14px;
  white-space: nowrap;
`;

const WeatherNote = styled.span`
  color: #5c5c5c;
  font-size: 12px;
`;

const TaskSearch = styled.div`
  ${row}
  flex: none;
  width: 205px;
  height: 29px;
  margin-left: 13px;
  background: #fdfdfc;
  border: 1px solid #e2e2de;
  border-radius: 15px;
`;

const RunningApp = styled.div`
  position: relative;
  flex: none;
  margin-left: 12px;
`;

const ActiveApp = styled.div`
  ${row}
  position: relative;
  justify-content: center;
  flex: none;
  width: 35px;
  height: 34px;
  margin-left: 14px;
  background: #fbfafa;
  border-radius: 4px;
`;

const Indicator = styled.span<{ $w: number; $color: string }>`
  position: absolute;
  bottom: -6px;
  left: 50%;
  width: ${({ $w }) => $w}px;
  height: 3px;
  border-radius: 2px;
  background: ${({ $color }) => $color};
  transform: translateX(-50%);

  ${ActiveApp} & {
    bottom: 0;
  }
`;

const SolTile = styled.div`
  flex: none;
  display: flex;
  flex-direction: column;
  align-items: center;
  width: 23px;
  height: 23px;
  margin-left: 12px;
  background: #7b1226;
  color: #fff;
  font-family: 'Liberation Sans', 'Noto Sans CJK KR', sans-serif;
  font-size: 9.6px;
  font-weight: 700;
  line-height: 11.5px;
`;

const Clock = styled.div`
  display: flex;
  flex-direction: column;
  align-items: flex-end;
  flex: none;
  width: 75px;
  color: #222;
  font-size: 11.3px;
  line-height: 15px;
  white-space: nowrap;
`;

const RecorderPanel = styled.div`
  ${row}
  position: absolute;
  top: 632px;
  left: 1080px;
  width: 191px;
  height: 36px;
  background: #0f0f10;
  border: 1px solid #2e3033;
  border-radius: 6px;
`;
